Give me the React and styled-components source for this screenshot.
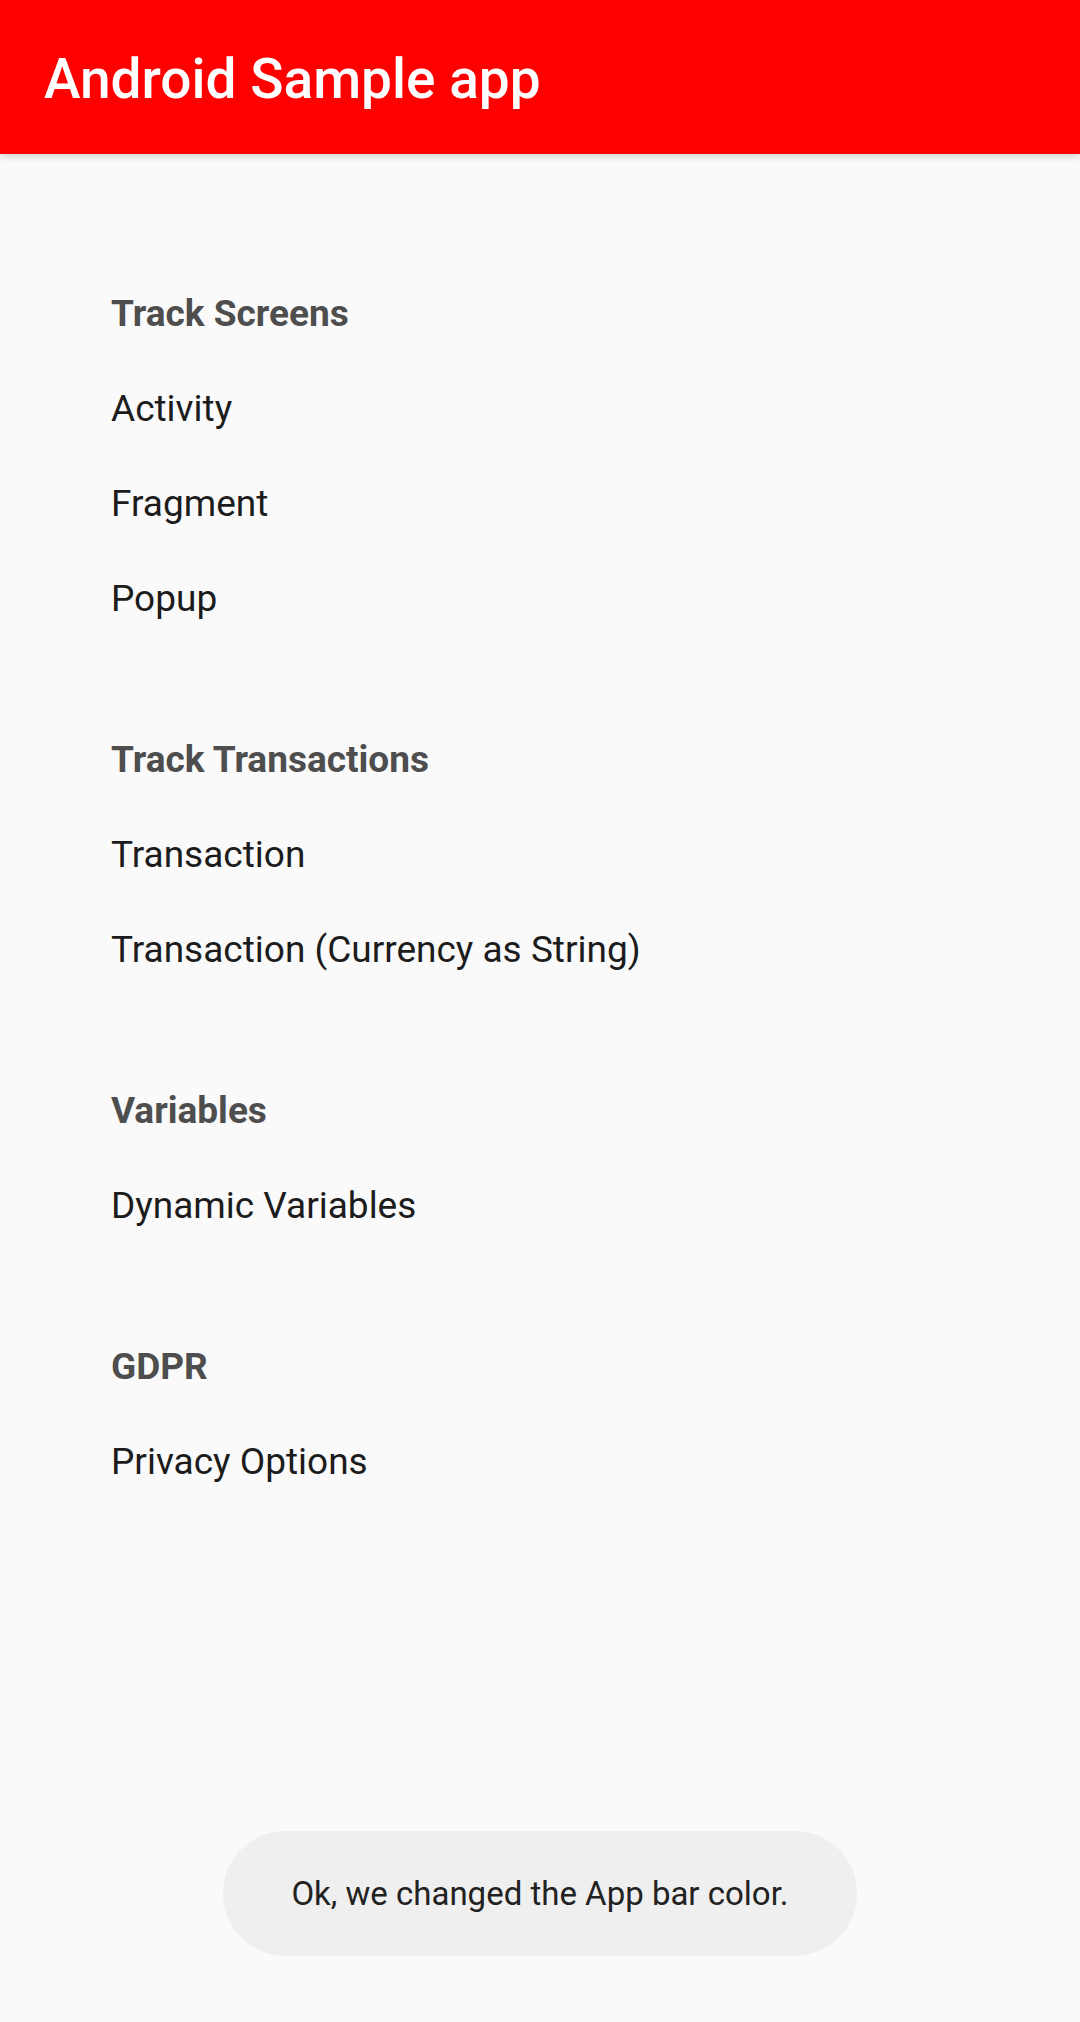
import React from 'react';
import styled, { createGlobalStyle } from 'styled-components';

const GlobalStyle = createGlobalStyle`
  html, body {
    margin: 0;
    padding: 0;
    background: #fafafa;
  }
  body {
    font-family: Roboto, "Noto Sans", sans-serif;
  }
`;

const Screen = styled.div`
  position: relative;
  width: 1080px;
  height: 2022px;
  background: #fafafa;
  overflow: hidden;
`;

const AppBar = styled.header`
  height: 154px;
  background: #ff0000;
  display: flex;
  align-items: center;
  padding-left: 44px;
  box-shadow: 0 2px 8px rgba(0, 0, 0, 0.18);
  position: relative;
  z-index: 1;
`;

const Title = styled.h1`
  margin: 4px 0 0;
  font-family: Roboto, sans-serif;
  font-weight: 500;
  font-size: 55px;
  color: #ffffff;
`;

const List = styled.main`
  display: flex;
  flex-direction: column;
  gap: 66px;
  padding-top: 112px;
`;

const Section = styled.section`
  display: flex;
  flex-direction: column;
`;

const Row = styled.div`
  height: 95px;
  line-height: 95px;
  padding-left: 111px;
  font-family: Roboto, sans-serif;
  font-size: 37px;
  font-weight: ${(p) => (p.$heading ? 700 : 400)};
  color: ${(p) => (p.$heading ? '#4e4e4e' : '#1c1c1c')};
`;

const Toast = styled.div`
  position: absolute;
  left: 50%;
  bottom: 66px;
  transform: translateX(-50%);
  width: 634px;
  height: 125px;
  border-radius: 63px;
  background: #efefef;
  display: flex;
  align-items: center;
  justify-content: center;
  font-family: Roboto, sans-serif;
  font-size: 33px;
  color: #222222;
`;

const sections = [
  { title: 'Track Screens', items: ['Activity', 'Fragment', 'Popup'] },
  { title: 'Track Transactions', items: ['Transaction', 'Transaction (Currency as String)'] },
  { title: 'Variables', items: ['Dynamic Variables'] },
  { title: 'GDPR', items: ['Privacy Options'] },
];

const App = () => (
  <Screen>
    <GlobalStyle />
    <AppBar>
      <Title>Android Sample app</Title>
    </AppBar>
    <List>
      {sections.map((s) => (
        <Section key={s.title}>
          <Row $heading>{s.title}</Row>
          {s.items.map((item) => (
            <Row key={item}>{item}</Row>
          ))}
        </Section>
      ))}
    </List>
    <Toast>Ok, we changed the App bar color.</Toast>
  </Screen>
);

export default App;
